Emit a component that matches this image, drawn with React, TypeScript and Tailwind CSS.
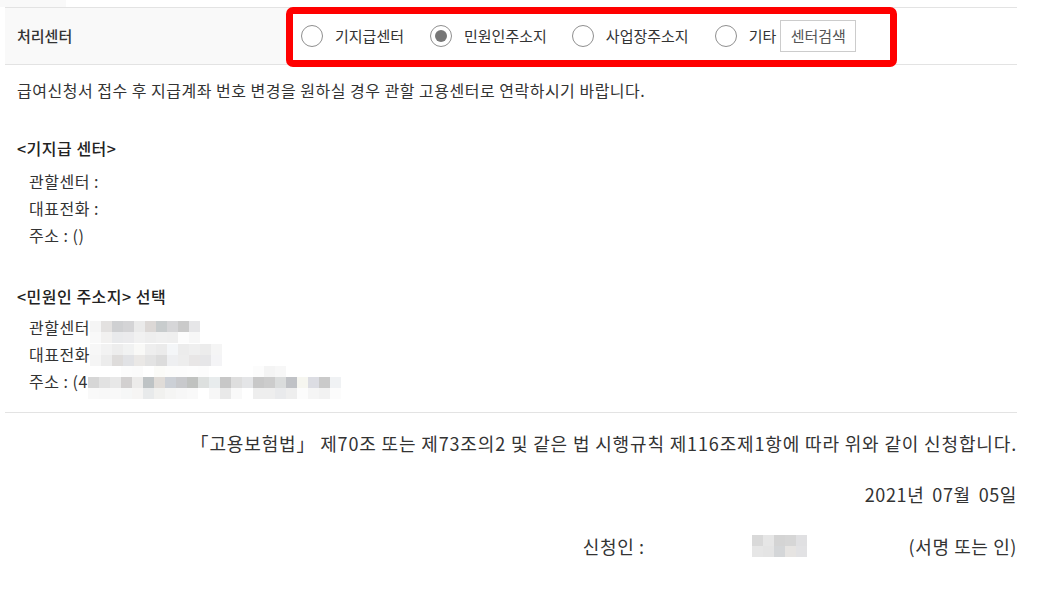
import React from "react";

const F = "font-['Noto_Sans_CJK_KR','Noto_Sans',sans-serif]";

function Mosaic({ rows, cell = 11, className = "" }: { rows: string[][]; cell?: number; className?: string }) {
  const cols = Math.max(...rows.map((r) => r.length));
  return (
    <svg width={cols * cell} height={rows.length * cell} className={className} viewBox={`0 0 ${cols * cell} ${rows.length * cell}`}>
      {rows.map((r, y) =>
        r.map((c, x) => <rect key={`${x}-${y}`} x={x * cell} y={y * cell} width={cell} height={cell} fill={c} />)
      )}
    </svg>
  );
}

const m1 = [
  ["#f5f5f5", "#e3e1e0", "#cfd0d2", "#d4d4d6", "#eaeaea", "#dcd8d6", "#c8cccd", "#d6d6d8", "#cacaca", "#e6e6e8"],
  ["#f9f9f9", "#f2f1f0", "#e9eaec", "#ebebed", "#f1f1f1", "#eeeeee", "#f0f0f0", "#efefef", "#fcfcfc", "#f7f7f7"],
];
const m2 = [
  ["#f7f7f7", "#f2f2f2", "#ededed", "#f1f2f2", "#f9f9f7", "#eeeeee", "#ebebeb", "#f4f6f8", "#ececec", "#efefef", "#ececec", "#f5f5f5"],
  ["#f5f5f5", "#ececec", "#dedcdb", "#e1e2e5", "#eae8e6", "#e3e3e3", "#dcdcdc", "#eeeff1", "#ededed", "#e8e6e6", "#e6e6e8", "#f4f4f6"],
];
const m3 = [
  ["#ffffff", "#ffffff", "#ffffff", "#fcfcfc", "#fbfbfb", "#ffffff", "#fbfbf8", "#fcfcfb", "#fcfcfc", "#fdfdfd", "#fcfcfc", "#ffffff", "#ffffff", "#ffffff", "#ffffff", "#fcfcfc", "#f4f4f4", "#f7f7f7", "#ffffff", "#ffffff", "#ffffff", "#ffffff", "#ffffff"],
  ["#d6d6d6", "#e2e2e2", "#e8e8e8", "#d2d0d0", "#ecebea", "#bec3c5", "#e0dcd8", "#ccd0d6", "#c8c9cc", "#c0c2c0", "#dde0df", "#e8eced", "#c7c7c7", "#dedede", "#e4e5e7", "#c8c8c8", "#cccccc", "#dadcdc", "#c0c2c6", "#f6f6f0", "#dcdde3", "#cacaca", "#f0f2f4"],
  ["#f9f9f9", "#f8f8f8", "#f9f9f9", "#f6f7f7", "#f6f5f4", "#e8eaeb", "#f1f1ef", "#f5f5f4", "#f7f7f7", "#f9f9f9", "#ffffff", "#f7f7f7", "#e9e9e9", "#f9f9f9", "#ffffff", "#eeeeee", "#eeeeee", "#e9eaec", "#eeeeee", "#fcfcfc", "#f5f5f5", "#f2f2f2", "#fcfcfc"],
];
const m4 = [
  ["#d9d9d9", "#e6e6e6", "#d4d4d4", "#d6d6d6", "#e0e0e2"],
  ["#e6e6e6", "#e4e4e4", "#d4d6d8", "#e6e4e2", "#e2e2e4"],
];

function Radio({ checked, label }: { checked?: boolean; label: string }) {
  return (
    <label className="flex items-center">
      <span className="w-[22px] h-[22px] rounded-full border border-[#8f8f8f] bg-white flex items-center justify-center">
        {checked && <span className="w-[12px] h-[12px] rounded-full bg-[#777777]" />}
      </span>
      <span className="ml-[12px] text-[15px] text-[#333]">{label}</span>
    </label>
  );
}

export default function App() {
  return (
    <div className={`relative w-[1037px] h-[597px] bg-white overflow-hidden ${F} text-[#333]`}>
      <div className="h-[7px] w-[66px] bg-[#f9f9f9]" />
      <div className="ml-[5px] w-[1012px]">
        <div className="flex h-[58px] border-y border-[#e3e3e3]">
          <div className="w-[283px] bg-[#f9f9f9] pl-[12px] flex items-center text-[15px] font-medium text-[#333]">처리센터</div>
          <div className="flex items-center pl-[13px]">
            <Radio label="기지급센터" />
            <div className="w-[26px]" />
            <Radio checked label="민원인주소지" />
            <div className="w-[25px]" />
            <Radio label="사업장주소지" />
            <div className="w-[26px]" />
            <Radio label="기타" />
            <button className="ml-[4px] h-[32px] w-[76px] border border-[#cccccc] bg-white text-[15px] text-[#555]">센터검색</button>
          </div>
        </div>

        <div className="pl-[12px] text-[16px] tracking-[0.5px] leading-[27px]">
          <p className="mt-[12px]">급여신청서 접수 후 지급계좌 번호 변경을 원하실 경우 관할 고용센터로 연락하시기 바랍니다.</p>

          <p className="mt-[31px] font-medium text-[#222]">&lt;기지급 센터&gt;</p>
          <div className="pl-[12px] mt-[6px]">
            <p>관할센터 :</p>
            <p>대표전화 :</p>
            <p>주소 : ()</p>
          </div>

          <p className="mt-[34px] font-medium text-[#222]">&lt;민원인 주소지&gt; 선택</p>
          <div className="pl-[12px] mt-[4px]">
            <div className="flex items-center h-[27px]">
              <span>관할센터</span>
              <Mosaic rows={m1} className="mt-[9px]" />
            </div>
            <div className="flex items-center h-[27px]">
              <span>대표전화</span>
              <Mosaic rows={m2} />
            </div>
            <div className="flex items-center h-[27px]">
              <span>주소 : (4</span>
              <Mosaic rows={m3} className="mt-[1px]" />
            </div>
          </div>
        </div>

        <div className="mt-[17px] border-t border-[#e3e3e3]" />

        <div className="text-[18px] tracking-[0.6px] leading-[28px] text-right text-[#333]">
          <p className="mt-[16px] tracking-[0.85px]">「고용보험법」 제70조 또는 제73조의2 및 같은 법 시행규칙 제116조제1항에 따라 위와 같이 신청합니다.</p>
          <p className="mt-[23px] flex justify-end gap-[8px]">
            <span>2021년</span>
            <span>07월</span>
            <span>05일</span>
          </p>
          <div className="mt-[24px] flex items-center justify-end">
            <span>신청인 :</span>
            <Mosaic rows={m4} className="ml-[107px]" />
            <span className="ml-[102px]">(서명 또는 인)</span>
          </div>
        </div>
      </div>

      <div className="absolute left-[286px] top-[7px] w-[611px] h-[60px] border-[7px] border-[#ff0000] rounded-[7px]" />
    </div>
  );
}
